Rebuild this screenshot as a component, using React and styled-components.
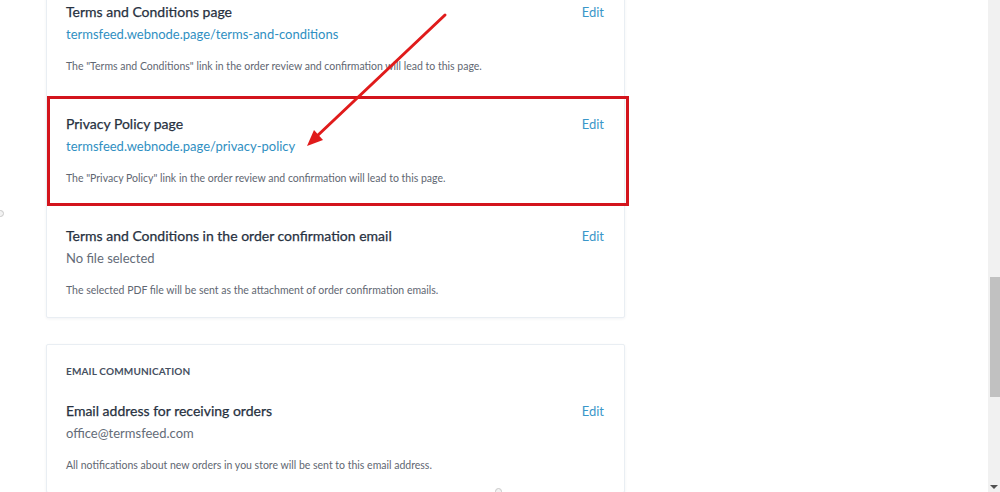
import React from 'react'
import styled, { createGlobalStyle } from 'styled-components'

const GlobalStyle = createGlobalStyle`
  html, body {
    margin: 0;
    padding: 0;
    background: #ffffff;
    overflow: hidden;
    font-family: Lato, "Noto Sans", sans-serif;
  }
`

const Page = styled.div`
  position: relative;
  width: 1000px;
  height: 492px;
  overflow: hidden;
  background: #ffffff;
`

const Column = styled.div`
  display: flex;
  flex-direction: column;
  gap: 26px;
  width: 579px;
  margin: -20px 0 0 46px;
`

const Card = styled.section`
  background: #fff;
  border: 1px solid #e9eef3;
  border-radius: 2px;
  box-shadow: 0 1px 3px rgba(30, 50, 80, 0.06);
`

const CardHeader = styled.div`
  padding: 19px 19px 0;
  font-size: 10px;
  line-height: 14px;
  font-weight: 700;
  letter-spacing: 0.15px;
  color: #465061;
  text-transform: uppercase;
`

const Row = styled.div`
  display: flex;
  justify-content: space-between;
  align-items: flex-start;
  padding: ${p => (p.$first ? '25px' : '23px')} 20px 20px 19px;
`

const RowBody = styled.div`
  display: flex;
  flex-direction: column;
`

const Title = styled.div`
  font-size: 14px;
  line-height: 16px;
  font-weight: 400;
  color: #27313f;
  -webkit-text-stroke: 0.25px #27313f;
`

const Value = styled.div`
  margin-top: 6px;
  font-size: 13px;
  line-height: 16px;
  color: ${p => (p.$link ? '#2f8fc2' : '#646c78')};
`

const Note = styled.div`
  margin-top: 17px;
  font-size: 10.5px;
  line-height: 14px;
  color: #5f6772;
`

const EditLink = styled.a`
  font-size: 13px;
  line-height: 16px;
  color: #3a97c9;
  text-decoration: none;
  cursor: pointer;
`

const Highlight = styled.div`
  position: absolute;
  left: 47px;
  top: 96px;
  width: 576px;
  height: 104px;
  border: 3px solid #d3141c;
  pointer-events: none;
`

const ArrowLayer = styled.svg`
  position: absolute;
  left: 0;
  top: 0;
  pointer-events: none;
`

const ScrollTrack = styled.div`
  position: absolute;
  top: 0;
  right: 0;
  width: 12px;
  height: 492px;
  background: #f1f1f1;
  display: flex;
  flex-direction: column;
  align-items: flex-end;
`

const ScrollThumb = styled.div`
  margin-top: 277px;
  width: 10px;
  height: 120px;
  background: #c1c1c1;
`

const ScrollArrow = styled.div`
  margin-top: auto;
  margin-bottom: 3px;
  margin-right: 2px;
  width: 0;
  height: 0;
  border-left: 4px solid transparent;
  border-right: 4px solid transparent;
  border-top: 4px solid #505050;
`

const Dot = styled.div`
  position: absolute;
  left: ${p => p.$x}px;
  top: ${p => p.$y}px;
  width: 7px;
  height: 7px;
  border-radius: 50%;
  border: 1px solid #c8c8c8;
  box-sizing: border-box;
  background: #f3f3f3;
`

const legalRows = [
  {
    title: 'Terms and Conditions page',
    value: 'termsfeed.webnode.page/terms-and-conditions',
    link: true,
    note: 'The "Terms and Conditions" link in the order review and confirmation will lead to this page.',
  },
  {
    title: 'Privacy Policy page',
    value: 'termsfeed.webnode.page/privacy-policy',
    link: true,
    note: 'The "Privacy Policy" link in the order review and confirmation will lead to this page.',
  },
  {
    title: 'Terms and Conditions in the order confirmation email',
    value: 'No file selected',
    link: false,
    note: 'The selected PDF file will be sent as the attachment of order confirmation emails.',
  },
]

const SettingRow = ({ title, value, link, note, first }) => (
  <Row $first={first}>
    <RowBody>
      <Title>{title}</Title>
      <Value $link={link}>{value}</Value>
      <Note>{note}</Note>
    </RowBody>
    <EditLink>Edit</EditLink>
  </Row>
)

export default function App() {
  return (
    <>
      <GlobalStyle />
      <Page>
        <Column>
          <Card>
            {legalRows.map(r => (
              <SettingRow key={r.title} {...r} />
            ))}
          </Card>
          <Card>
            <CardHeader>Email communication</CardHeader>
            <SettingRow
              first
              title="Email address for receiving orders"
              value="office@termsfeed.com"
              note="All notifications about new orders in you store will be sent to this email address."
            />
          </Card>
        </Column>

        <Highlight />
        <ArrowLayer width="1000" height="492" viewBox="0 0 1000 492">
          <line x1="445" y1="15" x2="316" y2="137" stroke="#e01b1b" strokeWidth="3" strokeLinecap="round" />
          <polygon points="307,146 323,140 314,130" fill="#e01b1b" />
        </ArrowLayer>

        <Dot $x={-3} $y={210} />
        <Dot $x={996} $y={210} />
        <Dot $x={495} $y={488} />

        <ScrollTrack>
          <ScrollThumb />
          <ScrollArrow />
        </ScrollTrack>
      </Page>
    </>
  )
}
